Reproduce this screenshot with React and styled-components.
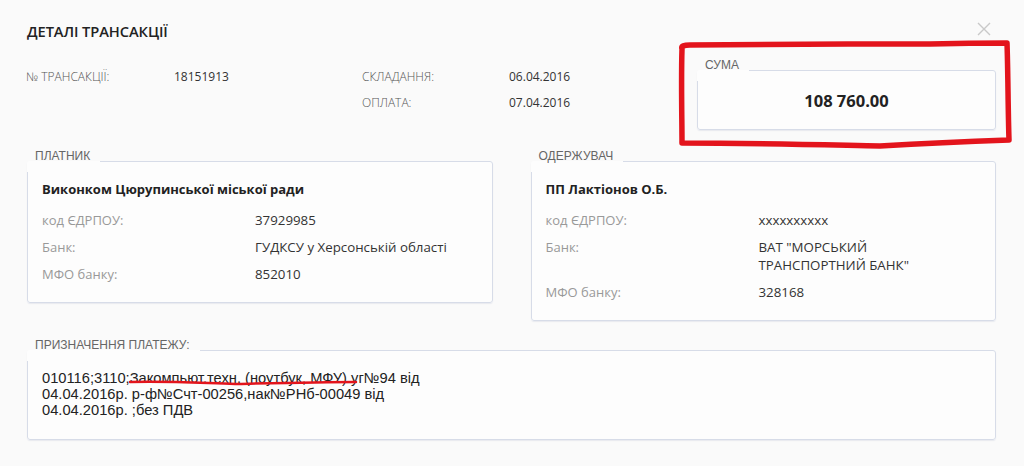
import React from "react";
import styled, { createGlobalStyle } from "styled-components";

const Global = createGlobalStyle`
  html, body { margin: 0; padding: 0; background: #fafafa; }
  body { font-family: "Open Sans", "Noto Sans", sans-serif; color: #333; }
  * { box-sizing: border-box; }
`;

const Page = styled.div`
  position: relative;
  width: 1024px;
  height: 466px;
  padding: 21px 28px 0 27px;
  background: #fafafa;
  overflow: hidden;
`;

const Header = styled.div`
  display: flex;
  align-items: center;
  justify-content: space-between;
  height: 20px;
`;

const Title = styled.h1`
  margin: 0;
  font-size: 14.7px;
  line-height: 20px;
  font-weight: 600;
  color: #222;
  letter-spacing: -0.1px;
`;

const CloseButton = styled.button`
  border: 0;
  background: none;
  padding: 0;
  margin: -4px 5px 0 0;
  width: 14px;
  height: 14px;
  display: flex;
  cursor: pointer;
`;

const TopRow = styled.div`
  display: flex;
  justify-content: space-between;
  align-items: flex-start;
  margin-top: 18px;
`;

const InfoGrid = styled.div`
  display: grid;
  grid-template-columns: 148px 188px 147px auto;
  row-gap: 8px;
  margin-top: 9px;
  margin-left: -1px;
  font-size: 12px;
  line-height: 18px;
`;

const InfoLabel = styled.div`
  color: #555;
  font-weight: 300;
  grid-column: ${(p) => p.$col || "auto"};
`;

const InfoValue = styled.div`
  color: #333;
`;

const Fieldset = styled.fieldset`
  margin: 0;
  padding: 0;
  min-width: 0;
  border: 1px solid #d7dce8;
  border-radius: 3px;
  background: #fdfdfd;
  box-shadow: 0 1px 1px rgba(200, 205, 220, 0.35);
  width: ${(p) => p.$width || "auto"};
`;

const Legend = styled.legend`
  padding: 0 10px 10px 8px;
  margin-left: -1px;
  font-family: "Liberation Sans", Arial, sans-serif;
  font-size: 12px;
  line-height: 12px;
  color: #666;
  text-transform: uppercase;
`;

const SumBody = styled.div`
  padding: 10px 0 18px;
  text-align: center;
  font-size: 16.5px;
  line-height: 20px;
  font-weight: 700;
  color: #222;
`;

const Parties = styled.div`
  display: grid;
  grid-template-columns: 1fr 1fr;
  column-gap: 38px;
  align-items: start;
  margin-top: 20px;
`;

const PartyBody = styled.div`
  padding: 8px 15px 19px 14px;
  font-size: 13px;
  line-height: 18px;
`;

const PartyName = styled.div`
  font-weight: 700;
  color: #222;
  margin-bottom: 13px;
`;

const PartyGrid = styled.div`
  display: grid;
  grid-template-columns: 213px 200px;
  row-gap: 9px;
`;

const PartyLabel = styled.div`
  color: #999;
`;

const PartyValue = styled.div`
  color: #333;
  font-size: 13.3px;
`;

const PurposeWrap = styled.div`
  margin-top: 18px;
`;

const PurposeBody = styled.div`
  padding: 9px 15px 21px 14px;
  font-family: "Liberation Sans", Arial, sans-serif;
  font-size: 14.7px;
  line-height: 16px;
  color: #222;
  width: 460px;
`;

const Annotation = styled.svg`
  position: absolute;
  left: 0;
  top: 0;
  pointer-events: none;
`;

const CloseIcon = () => (
  <svg width="14" height="14" viewBox="0 0 14 14">
    <path d="M1 1 L13 13 M13 1 L1 13" stroke="#c9c9c9" strokeWidth="1.4" fill="none" />
  </svg>
);

const payer = {
  legend: "Платник",
  name: "Виконком Цюрупинської міської ради",
  rows: [
    ["код ЄДРПОУ:", "37929985"],
    ["Банк:", "ГУДКСУ у Херсонській області"],
    ["МФО банку:", "852010"],
  ],
};

const recipient = {
  legend: "Одержувач",
  name: "ПП Лактіонов О.Б.",
  rows: [
    ["код ЄДРПОУ:", "xxxxxxxxxx"],
    ["Банк:", 'ВАТ "МОРСЬКИЙ ТРАНСПОРТНИЙ БАНК"'],
    ["МФО банку:", "328168"],
  ],
};

const Party = ({ data }) => (
  <Fieldset>
    <Legend>{data.legend}</Legend>
    <PartyBody>
      <PartyName>{data.name}</PartyName>
      <PartyGrid>
        {data.rows.map(([l, v]) => (
          <React.Fragment key={l}>
            <PartyLabel>{l}</PartyLabel>
            <PartyValue>{v}</PartyValue>
          </React.Fragment>
        ))}
      </PartyGrid>
    </PartyBody>
  </Fieldset>
);

export default function App() {
  return (
    <>
      <Global />
      <Page>
        <Header>
          <Title>ДЕТАЛІ ТРАНСАКЦІЇ</Title>
          <CloseButton aria-label="close">
            <CloseIcon />
          </CloseButton>
        </Header>

        <TopRow>
          <InfoGrid>
            <InfoLabel>№ ТРАНСАКЦІЇ:</InfoLabel>
            <InfoValue>18151913</InfoValue>
            <InfoLabel>СКЛАДАННЯ:</InfoLabel>
            <InfoValue>06.04.2016</InfoValue>
            <InfoLabel $col="3">ОПЛАТА:</InfoLabel>
            <InfoValue>07.04.2016</InfoValue>
          </InfoGrid>
          <Fieldset $width="299px">
            <Legend>Сума</Legend>
            <SumBody>108 760.00</SumBody>
          </Fieldset>
        </TopRow>

        <Parties>
          <Party data={payer} />
          <Party data={recipient} />
        </Parties>

        <PurposeWrap>
          <Fieldset>
            <Legend>Призначення платежу:</Legend>
            <PurposeBody>
              010116;3110;Закомпьют.техн. (ноутбук, МФУ) уг№94 від 04.04.2016р. р-ф№Счт-00256,нак№РНб-00049 від 04.04.2016р. ;без ПДВ
            </PurposeBody>
          </Fieldset>
        </PurposeWrap>

        <Annotation width="1024" height="466" viewBox="0 0 1024 466">
          <path
            d="M682 49 C681 46 684 45 690 45 C760 44 850 44 930 44 C970 43 995 43 1007 43 C1008 70 1008 110 1009 140 C980 141 930 143 880 146 C830 145 760 143 682 143 C682 120 681 80 682 49 Z"
            stroke="#e3141c"
            strokeWidth="5.5"
            fill="none"
            strokeLinejoin="round"
            strokeLinecap="round"
          />
          <path
            d="M130 382 C170 381 200 383 235 384 C280 383 320 382 356 382"
            stroke="#e3141c"
            strokeWidth="2.5"
            fill="none"
            strokeLinecap="round"
          />
        </Annotation>
      </Page>
    </>
  );
}
